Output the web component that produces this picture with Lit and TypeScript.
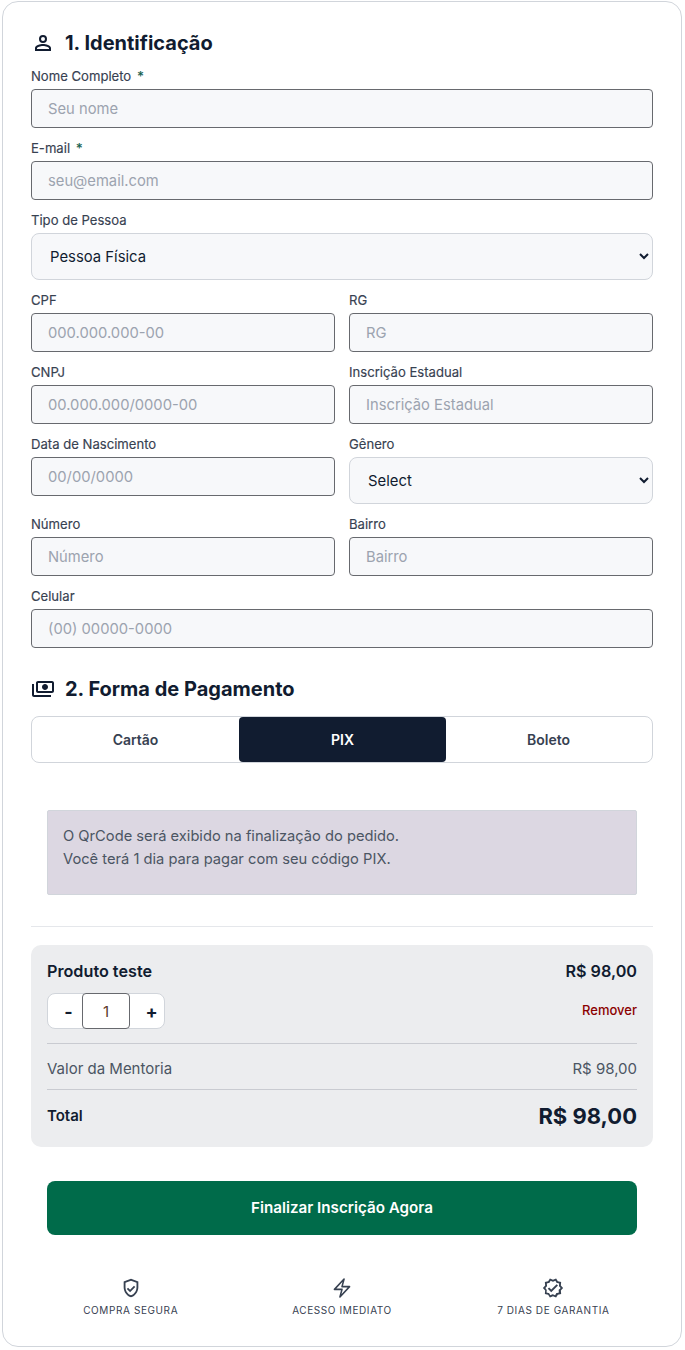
import { LitElement, html, css } from "lit";
import { customElement } from "lit/decorators.js";

const field = (label: string, ph: string, req = false) => html`
  <div class="field">
    <label>${label}${req ? html`<span class="req">*</span>` : ""}</label>
    <input placeholder=${ph} />
  </div>`;
const selectField = (label: string, opt: string) => html`
  <div class="field">
    <label>${label}</label>
    <select><option>${opt}</option></select>
  </div>`;

@customElement("app-root")
export class AppRoot extends LitElement {
  static styles = css`
    :host { display: block; font-family: Inter, "Liberation Sans", sans-serif; color: #111c30; }
    * { box-sizing: border-box; }
    .card { margin: 1px 3px 0 2px; height: 1346px; border: 1px solid #d1d5db; border-radius: 16px; background: #fff; padding: 26px 28px 0 28px; }
    h2 { margin: 0; display: flex; align-items: center; gap: 10px; height: 30px; font-size: 20px; font-weight: 700; color: #111c30; }
    h2 svg { width: 24px; height: 24px; fill: #111c30; flex: none; }
    .fields { display: flex; flex-direction: column; gap: 10px; margin-top: 8px; }
    .row { display: grid; grid-template-columns: 1fr 1fr; gap: 14px; align-items: start; }
    .field { display: flex; flex-direction: column; gap: 3px; min-width: 0; }
    label { font-size: 13.1px; font-weight: 400; line-height: 20px; color: #374151; -webkit-text-stroke: 0.15px #374151; }
    .req { color: #006b4a; margin-left: 6px; }
    input { height: 39px; width: 100%; border: 1px solid #67696e; border-radius: 4px; background: #f7f8fa; padding: 0 16px; font: 400 14.75px Inter, sans-serif; color: #111c30; outline: none; }
    input::placeholder { color: #9ca3af; opacity: 1; }
    select { height: 47px; width: 100%; border: 1px solid #d1d5db; border-radius: 8px; background: #f7f8fa; padding: 0 14px; font: 400 14.85px Inter, sans-serif; color: #111c30; outline: none; }
    .h2b { margin-top: 26px; }
    .tabs { display: flex; margin-top: 12px; height: 47px; border: 1px solid #d1d5db; border-radius: 8px; overflow: hidden; }
    .tab { flex: 1; display: flex; align-items: center; justify-content: center; font-size: 14px; font-weight: 600; color: #374151; }
    .tab.on { background: #111c30; color: #fff; border-radius: 4px; margin-right: -1px; }
    .info { margin: 47px 16px 0; height: 85px; background: #dcd7e2; border: 1px solid #d1d5db; border-radius: 2px; padding: 14px 15px; font-size: 14.7px; line-height: 23px; color: #4b5563; }
    hr { border: 0; border-top: 1px solid #e5e7eb; margin: 31px 0 18px; }
    .summary { background: #ecedef; border-radius: 10px; padding: 16px; height: 202px; }
    .between { display: flex; justify-content: space-between; align-items: center; }
    .name { font-size: 16.2px; font-weight: 600; line-height: 20px; }
    .qtyrow { margin-top: 12px; }
    .qty { width: 118px; height: 36px; display: flex; background: #fff; border: 1px solid #d1d5db; border-radius: 8px; }
    .qty span { width: 34px; display: flex; align-items: center; justify-content: center; font-size: 18px; font-weight: 700; color: #111c30; }
    .qty span:first-child { padding-left: 7px; }
    .qty span:last-child { padding-left: 9px; }
    .qty b { width: 48px; height: 36px; margin: -1px 0; border: 1px solid #67696e; border-radius: 4px; background: #fff; display: flex; align-items: center; justify-content: center; font-size: 15px; font-weight: 400; color: #5c3a2a; }
    .remove { font-size: 13px; font-weight: 500; color: #8b0000; margin-bottom: 2px; }
    .line { border-top: 1px solid #c9cbd1; }
    .val { margin-top: 14px; height: 46px; padding-top: 3px; font-size: 15px; color: #4b5563; }
    .tot { height: 54px; padding-bottom: 2px; font-size: 15px; font-weight: 600; }
    .tot strong { font-size: 22px; font-weight: 700; }
    .cta { margin: 34px 16px 0; height: 54px; padding-bottom: 2px; background: #006b4a; border-radius: 8px; color: #fff; font-size: 15.2px; font-weight: 600; display: flex; align-items: center; justify-content: center; }
    .trust { display: grid; grid-template-columns: repeat(3, 1fr); gap: 12px; margin-top: 42px; }
    .t { display: flex; flex-direction: column; align-items: center; gap: 5px; font-size: 10px; letter-spacing: 0.6px; line-height: 12px; color: #374151; font-weight: 400; }
    .t svg { width: 22px; height: 22px; display: block; }
    .f { fill: #374151; }
    .s { fill: none; stroke: #374151; stroke-width: 1.7; stroke-linejoin: round; stroke-linecap: round; }
  `;

  render() {
    return html`<div class="card">
      <h2>
        <svg viewBox="0 0 24 24"><path d="M12 6a2 2 0 1 1 0 4 2 2 0 0 1 0-4m0 9c2.7 0 5.8 1.29 6 2v1H6v-.99c.2-.72 3.3-2.01 6-2.01M12 4a4 4 0 1 0 0 8 4 4 0 0 0 0-8zm0 9c-2.67 0-8 1.34-8 4v3h16v-3c0-2.66-5.33-4-8-4z"/></svg>
        1. Identificação
      </h2>
      <div class="fields">
        ${field("Nome Completo", "Seu nome", true)}
        ${field("E-mail", "seu@email.com", true)}
        ${selectField("Tipo de Pessoa", "Pessoa Física")}
        <div class="row">${field("CPF", "000.000.000-00")}${field("RG", "RG")}</div>
        <div class="row">${field("CNPJ", "00.000.000/0000-00")}${field("Inscrição Estadual", "Inscrição Estadual")}</div>
        <div class="row">${field("Data de Nascimento", "00/00/0000")}${selectField("Gênero", "Select")}</div>
        <div class="row">${field("Número", "Número")}${field("Bairro", "Bairro")}</div>
        ${field("Celular", "(00) 00000-0000")}
      </div>
      <h2 class="h2b">
        <svg viewBox="0 0 24 24"><g transform="translate(24 0) scale(-1 1)"><path d="M19 14V6c0-1.1-.9-2-2-2H3c-1.1 0-2 .9-2 2v8c0 1.1.9 2 2 2h14c1.1 0 2-.9 2-2zm-2 0H3V6h14v8zm-7-7c-1.66 0-3 1.34-3 3s1.34 3 3 3 3-1.34 3-3-1.34-3-3-3zm13 0v11c0 1.1-.9 2-2 2H4v-2h17V7h2z"/></g></svg>
        2. Forma de Pagamento
      </h2>
      <div class="tabs">
        <div class="tab">Cartão</div>
        <div class="tab on">PIX</div>
        <div class="tab">Boleto</div>
      </div>
      <div class="info">O QrCode será exibido na finalização do pedido.<br />Você terá 1 dia para pagar com seu código PIX.</div>
      <hr />
      <div class="summary">
        <div class="between name"><span>Produto teste</span><span>R$ 98,00</span></div>
        <div class="between qtyrow">
          <div class="qty"><span>-</span><b>1</b><span>+</span></div>
          <span class="remove">Remover</span>
        </div>
        <div class="line val between"><span>Valor da Mentoria</span><span>R$ 98,00</span></div>
        <div class="line tot between"><span>Total</span><strong>R$ 98,00</strong></div>
      </div>
      <div class="cta">Finalizar Inscrição Agora</div>
      <div class="trust">
        <div class="t">
          <svg viewBox="0 0 24 24"><path class="f" d="M12 2 4 5v6.09c0 5.05 3.41 9.76 8 10.91 4.59-1.15 8-5.86 8-10.91V5l-8-3zm6 9.09c0 4-2.55 7.7-6 8.83-3.45-1.13-6-4.82-6-8.83v-4.7l6-2.25 6 2.25v4.7zm-9.18.55L7.4 13.05 11 16.64l5.66-5.66-1.41-1.41-4.24 4.24-2.19-2.17z"/></svg>
          COMPRA SEGURA
        </div>
        <div class="t">
          <svg viewBox="0 0 24 24"><path class="s" d="M3.75 13.5l10.5-11.25L12 10.5h8.25L9.75 21.75 12 13.5H3.75z"/></svg>
          ACESSO IMEDIATO
        </div>
        <div class="t">
          <svg viewBox="0 0 24 24"><path class="f" d="m23 12-2.44-2.78.34-3.68-3.61-.82-1.89-3.18L12 3 8.6 1.54 6.71 4.72l-3.61.81.34 3.68L1 12l2.44 2.78-.34 3.69 3.61.82 1.89 3.18L12 21l3.4 1.46 1.89-3.18 3.61-.82-.34-3.68L23 12zm-4.28 1.48-.56.65.08.85.18 1.95-1.9.43-.84.19-.44.74-.99 1.68-1.78-.77-.79-.34-.79.34-1.78.77-.99-1.67-.44-.74-.84-.19-1.9-.43.18-1.96.08-.85-.56-.65L3.67 12l1.29-1.48.56-.65-.09-.86-.18-1.94 1.9-.43.84-.19.44-.74.99-1.68 1.78.77.79.34.79-.34 1.78-.77.99 1.68.44.74.84.19 1.9.43-.18 1.95-.08.85.56.65 1.29 1.47-1.29 1.48z"/><path class="f" d="M10.09 13.75 7.77 11.42 6.29 12.91 10.09 16.72 17.43 9.36 15.95 7.87z"/></svg>
          7 DIAS DE GARANTIA
        </div>
      </div>
    </div>`;
  }
}
